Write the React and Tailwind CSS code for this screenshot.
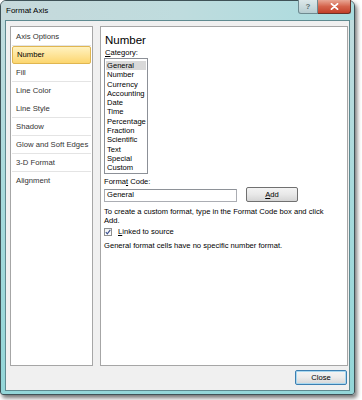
import React from 'react'

const sections = [
  { label: 'Axis Options', sep: true },
  { label: 'Number', active: true, sep: true },
  { label: 'Fill', sep: true },
  { label: 'Line Color' },
  { label: 'Line Style', sep: true },
  { label: 'Shadow', sep: true },
  { label: 'Glow and Soft Edges', sep: true },
  { label: '3-D Format', sep: true },
  { label: 'Alignment' },
]

const categories = [
  'General', 'Number', 'Currency', 'Accounting', 'Date', 'Time',
  'Percentage', 'Fraction', 'Scientific', 'Text', 'Special', 'Custom',
]

export default function App() {
  return (
    <div className="w-[362px] h-[400px] bg-white font-['Liberation_Sans',Arial,sans-serif] text-black overflow-hidden">
      {/* ── Window frame ─────────────────────────────── */}
      <div className="w-[355px] h-[395px] flex flex-col border border-[#3f5257] rounded-t-[6px] rounded-b-[3px] px-[4px] pb-[3px] bg-gradient-to-b from-[#c3dcde] via-[#a6dadc] to-[#93d6d8] shadow-[2px_3px_4px_rgba(0,0,0,0.55)]">
        {/* Title bar */}
        <div className="h-[19px] flex items-start justify-between bg-gradient-to-r from-[#c6d9db] via-[#bfdcde] to-[#a9dcdf] -mx-[4px] px-[4px] rounded-t-[5px]">
          <span className="text-[8px] leading-none pt-[6px] pl-[1px]">Format Axis</span>
          <div className="flex -mt-[1px] -mr-[1px]">
            <div className="w-[20px] h-[14px] flex items-center justify-center rounded-bl-[3px] border border-t-0 border-[#6e8a90] bg-gradient-to-b from-[#dde8ea] to-[#b7cdd1] text-[8px] font-bold text-[#5c6e73]">
              ?
            </div>
            <div className="w-[33px] h-[14px] flex items-center justify-center rounded-br-[3px] border border-t-0 border-l-0 border-[#6b3127] bg-gradient-to-b from-[#e8a795] via-[#d4634b] to-[#c23f28]">
              <svg width="9" height="7" viewBox="0 0 9 7">
                <path d="M1.5 0.8 L7.5 6.2 M7.5 0.8 L1.5 6.2" stroke="#fff" strokeWidth="1.8" strokeLinecap="round" />
              </svg>
            </div>
          </div>
        </div>

        {/* Dialog body */}
        <div className="flex-1 flex flex-col border border-[#5f8a90] bg-[#f0f0f0] pt-[5px] pl-[4px] pr-[1px]">
          <div className="h-[340px] flex gap-[7px]">
            {/* Section list */}
            <div className="w-[83px] border border-[#a6a6a6] bg-white pt-[1px] px-[1px]">
              {sections.map((s) => (
                <div
                  key={s.label}
                  className={`h-[18px] flex items-center pl-[4px] text-[7.7px] ${
                    s.active
                      ? 'rounded-[2px] border border-[#e0b650] bg-gradient-to-b from-[#fff2bf] to-[#fcd66e] pl-[3px]'
                      : s.sep
                        ? 'border-b border-[#e4e4e4] text-[#333]'
                        : 'text-[#333]'
                  }`}
                >
                  {s.label}
                </div>
              ))}
            </div>

            {/* Number page */}
            <div className="w-[248px] border border-[#a6a6a6] bg-white pl-[3px] pt-[6px] text-[7.6px]">
              <div className="text-[11.5px] leading-[14px] pl-[1px]">Number</div>
              <div className="h-[11px] leading-[11px] pl-[1px]">
                <span className="underline">C</span>ategory:
              </div>
              <div className="w-[44px] h-[116px] border border-[#8c9097] pt-[2px] px-[1px]">
                {categories.map((c, i) => (
                  <div
                    key={c}
                    className={`h-[9.3px] leading-[9.3px] pl-[1px] ${i === 0 ? 'bg-[#d9d9d9]' : ''}`}
                  >
                    {c}
                  </div>
                ))}
              </div>
              <div className="mt-[2px] h-[12px] leading-[12px]">
                Forma<span className="underline">t</span> Code:
              </div>
              <div className="flex items-center gap-[9px] mt-[-1px]">
                <div className="w-[133px] h-[13px] mt-[1px] border border-[#abadb3] border-t-[#8e9298] flex items-center pl-[2px]">
                  General
                </div>
                <button className="w-[52px] h-[15px] rounded-[2px] border border-[#707070] bg-gradient-to-b from-[#f3f3f3] via-[#e8e8e8] to-[#d5d5d5] text-[7.6px] leading-none">
                  <span className="underline">A</span>dd
                </button>
              </div>
              <p className="w-[230px] mt-[5px] leading-[9px]">
                To create a custom format, type in the Format Code box and click Add.
              </p>
              <div className="flex items-center gap-[6px] mt-[2px] h-[10px]">
                <div className="w-[8px] h-[8px] border border-[#8e8f8f] bg-gradient-to-b from-[#f2f2f2] to-[#ffffff] flex items-center justify-center">
                  <svg width="6" height="6" viewBox="0 0 6 6">
                    <path d="M0.8 3.2 L2.3 4.8 L5.3 0.8" fill="none" stroke="#3a4f8f" strokeWidth="1.1" />
                  </svg>
                </div>
                <span>
                  <span className="underline">L</span>inked to source
                </span>
              </div>
              <div className="mt-[4px] leading-[9px]">
                General format cells have no specific number format.
              </div>
            </div>
          </div>

          {/* Footer */}
          <div className="flex justify-end pr-[1px] mt-[4px]">
            <button className="w-[52px] h-[15px] rounded-[2px] border border-[#3c7fb1] bg-gradient-to-b from-[#f4f4f4] via-[#ebebeb] to-[#d6d6d6] text-[7.6px] leading-none shadow-[inset_0_0_0_1px_#a8d8f0]">
              Close
            </button>
          </div>
        </div>
      </div>
    </div>
  )
}
